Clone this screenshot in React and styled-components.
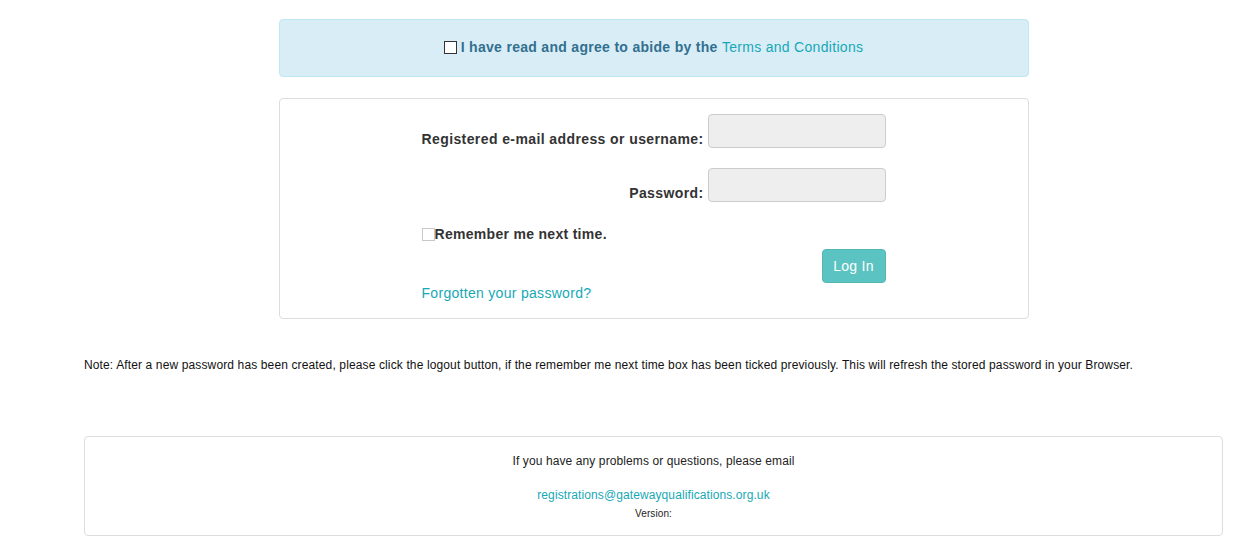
import styled, { createGlobalStyle } from "styled-components";

const GlobalStyle = createGlobalStyle`
  html, body {
    margin: 0;
    background: #fff;
    font-family: "Liberation Sans", Arial, sans-serif;
    color: #333;
  }
`;

const Page = styled.div`
  width: 1239px;
  box-sizing: border-box;
  padding: 19px 16px 0 84px;
`;

const Alert = styled.div`
  width: 750px;
  height: 58px;
  box-sizing: border-box;
  margin: 0 auto;
  padding-bottom: 2px;
  background: #d9edf7;
  border: 1px solid #bce8f1;
  border-radius: 4px;
  display: flex;
  align-items: center;
  justify-content: center;
  font-size: 14px;
  font-weight: bold;
  letter-spacing: 0.3px;
  color: #31708f;
`;

const Box = styled.span`
  display: inline-block;
  width: 13px;
  height: 13px;
  box-sizing: border-box;
  background: #fff;
  border: 1px solid ${(p) => (p.$light ? "#c8c8c8" : "#333")};
  margin-right: ${(p) => (p.$light ? "0" : "4px")};
  flex-shrink: 0;
`;

const Link = styled.a`
  color: #17a8b5;
  font-weight: normal;
  text-decoration: none;
  letter-spacing: ${(p) => p.$spacing || "0.3px"};
  font-size: ${(p) => p.$size || "14px"};
`;

const Panel = styled.div`
  width: 750px;
  box-sizing: border-box;
  margin: 21px auto 0;
  border: 1px solid #ddd;
  border-radius: 4px;
  padding: 15px 0 16px;
`;

const Form = styled.div`
  width: 464px;
  margin: 0 auto;
  display: grid;
  grid-template-columns: 1fr 178px;
  column-gap: 4px;
  row-gap: 20px;
  align-items: end;
`;

const Label = styled.label`
  font-size: 14px;
  font-weight: bold;
  letter-spacing: 0.4px;
  color: #333;
  text-align: right;
  white-space: nowrap;
  padding-bottom: 1px;
`;

const Input = styled.input`
  height: 34px;
  box-sizing: border-box;
  background: #eee;
  border: 1px solid #ccc;
  border-radius: 4px;
  width: 178px;
`;

const Remember = styled.div`
  width: 464px;
  margin: 24px auto 0;
  display: flex;
  align-items: center;
  font-size: 14px;
  font-weight: bold;
  letter-spacing: 0.3px;
  color: #333;
`;

const ButtonRow = styled.div`
  width: 464px;
  margin: 7px auto 0;
  display: flex;
  justify-content: flex-end;
`;

const Button = styled.button`
  width: 64px;
  height: 34px;
  background: #5bc3c1;
  border: 1px solid #52b8b6;
  border-radius: 4px;
  color: #fff;
  font-family: "Liberation Sans", Arial, sans-serif;
  font-size: 14px;
  letter-spacing: 0.3px;
`;

const Forgot = styled.div`
  width: 464px;
  margin: 1px auto 0;
`;

const Note = styled.p`
  margin: 39px 0 0;
  font-size: 12px;
  letter-spacing: 0.13px;
  color: #111;
`;

const Footer = styled.div`
  height: 100px;
  box-sizing: border-box;
  margin-top: 64px;
  border: 1px solid #ddd;
  border-radius: 4px;
  text-align: center;
  padding-top: 17px;
  font-size: 12px;
  letter-spacing: 0.1px;
  color: #222;
`;

const Line = styled.div`
  margin-bottom: ${(p) => p.$gap || "0"};
  font-size: ${(p) => p.$size || "12px"};
`;

export default function App() {
  return (
    <Page>
      <GlobalStyle />
      <Alert>
        <Box />I have read and agree to abide by the&nbsp;
        <Link href="#">Terms and Conditions</Link>
      </Alert>
      <Panel>
        <Form>
          <Label>Registered e-mail address or username:</Label>
          <Input />
          <Label>Password:</Label>
          <Input type="password" />
        </Form>
        <Remember>
          <Box $light />
          Remember me next time.
        </Remember>
        <ButtonRow>
          <Button>Log In</Button>
        </ButtonRow>
        <Forgot>
          <Link href="#">Forgotten your password?</Link>
        </Forgot>
      </Panel>
      <Note>
        Note: After a new password has been created, please click the logout
        button, if the remember me next time box has been ticked previously.
        This will refresh the stored password in your Browser.
      </Note>
      <Footer>
        <Line $gap="20px">If you have any problems or questions, please email</Line>
        <Line $gap="6px">
          <Link href="#" $size="12px" $spacing="0.1px">
            registrations@gatewayqualifications.org.uk
          </Link>
        </Line>
        <Line $size="10px">Version:</Line>
      </Footer>
    </Page>
  );
}
